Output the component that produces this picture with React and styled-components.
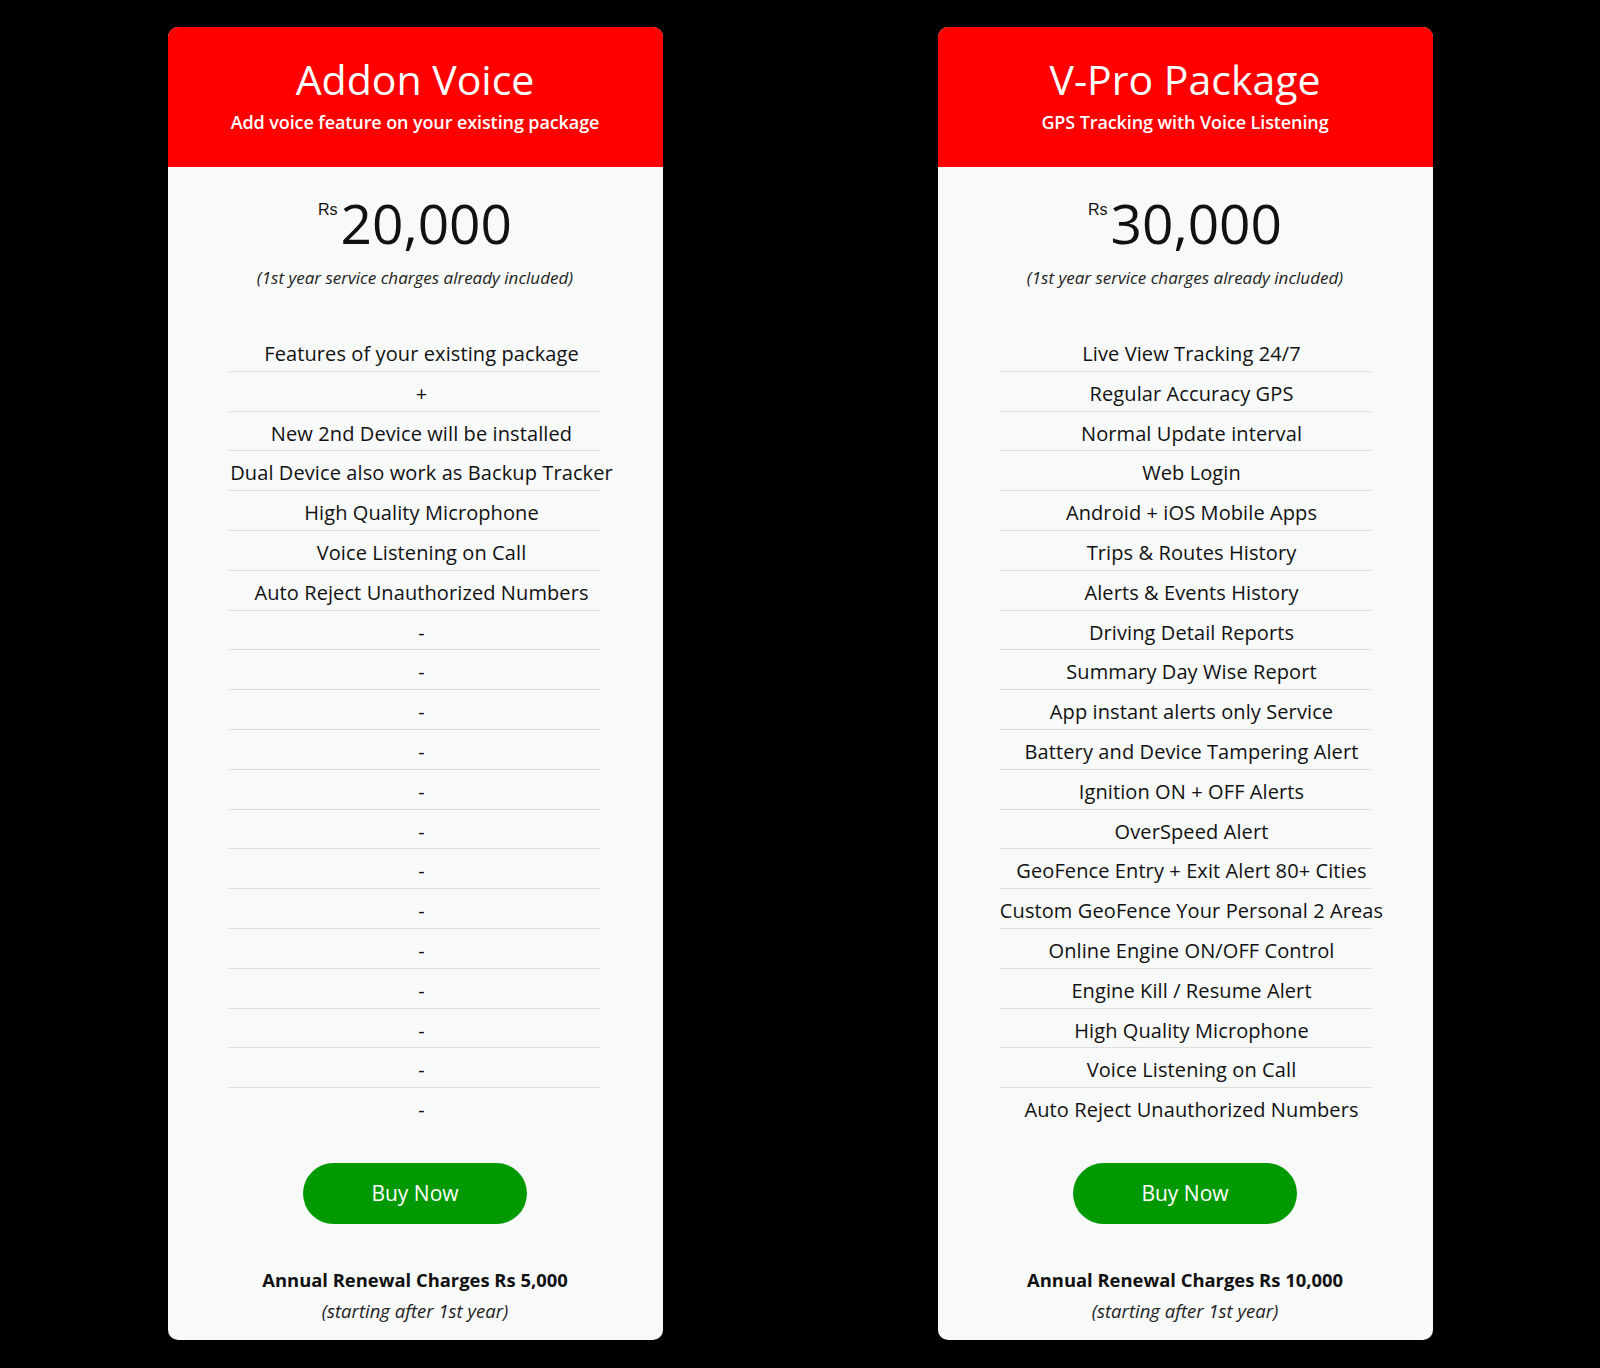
import React from "react";
import styled, { createGlobalStyle } from "styled-components";

const GlobalStyle = createGlobalStyle`
  html, body {
    margin: 0;
    padding: 0;
    background: #000;
  }
  body {
    font-family: "Open Sans", "Noto Sans", sans-serif;
  }
  * { box-sizing: border-box; }
`;

const Page = styled.div`
  min-height: 1368px;
  background: #000;
  padding: 27px 0 28px;
  display: flex;
  justify-content: center;
  align-items: flex-start;
  gap: 275px;
`;

const Card = styled.section`
  width: 495px;
  background: #f8f9f9;
  border-radius: 10px;
  overflow: hidden;
  display: flex;
  flex-direction: column;
  align-items: center;
  padding-bottom: 17px;
`;

const Header = styled.header`
  align-self: stretch;
  height: 140px;
  background: #ff0000;
  color: #fff;
  text-align: center;
  padding-top: 27px;
`;

const Title = styled.h2`
  margin: 0;
  font-size: 41px;
  line-height: 50px;
  font-weight: 400;
`;

const Subtitle = styled.p`
  margin: 6px 0 0;
  font-size: 18px;
  line-height: 24px;
  font-weight: 600;
  letter-spacing: -0.1px;
`;

const PriceLine = styled.div`
  display: flex;
  align-items: flex-start;
  justify-content: center;
  margin-top: 28px;
  color: #111;
`;

const Currency = styled.span`
  font-family: "Liberation Sans", Arial, sans-serif;
  font-size: 16px;
  line-height: 16px;
  margin-top: 7px;
  margin-right: 3px;
`;

const Amount = styled.span`
  font-size: 55px;
  line-height: 55px;
  font-weight: 400;
`;

const Note = styled.p`
  margin: 16px 0 0;
  font-size: 17px;
  line-height: 24px;
  font-style: italic;
  color: #222;
`;

const Features = styled.ul`
  list-style: none;
  margin: 42px 0 0;
  padding: 0;
  width: 372px;
`;

const Feature = styled.li`
  display: flex;
  justify-content: center;
  padding: 8px 0 2px 13px;
  font-size: 20px;
  line-height: 28.8px;
  height: 39.8px;
  color: #111;
  letter-spacing: 0.1px;
  white-space: nowrap;
  border-bottom: 1px solid #dddddd;
  &:last-child {
    border-bottom: none;
  }
`;

const BuyButton = styled.button`
  margin-top: 35px;
  width: 224px;
  height: 61px;
  border: none;
  border-radius: 31px;
  background: #009900;
  color: #fff;
  font-family: "Open Sans", sans-serif;
  font-size: 21px;
  display: flex;
  align-items: center;
  justify-content: center;
  cursor: pointer;
`;

const Renewal = styled.p`
  margin: 44px 0 0;
  font-size: 18.4px;
  line-height: 24px;
  font-weight: 700;
  color: #111;
`;

const RenewalNote = styled.p`
  margin: 7px 0 0;
  font-size: 18.5px;
  line-height: 24px;
  font-style: italic;
  color: #222;
`;

const plans = [
  {
    title: "Addon Voice",
    subtitle: "Add voice feature on your existing package",
    price: "20,000",
    features: [
      "Features of your existing package",
      "+",
      "New 2nd Device will be installed",
      "Dual Device also work as Backup Tracker",
      "High Quality Microphone",
      "Voice Listening on Call",
      "Auto Reject Unauthorized Numbers",
      ...Array(13).fill("-"),
    ],
    renewal: "Annual Renewal Charges Rs 5,000",
  },
  {
    title: "V-Pro Package",
    subtitle: "GPS Tracking with Voice Listening",
    price: "30,000",
    features: [
      "Live View Tracking 24/7",
      "Regular Accuracy GPS",
      "Normal Update interval",
      "Web Login",
      "Android + iOS Mobile Apps",
      "Trips & Routes History",
      "Alerts & Events History",
      "Driving Detail Reports",
      "Summary Day Wise Report",
      "App instant alerts only Service",
      "Battery and Device Tampering Alert",
      "Ignition ON + OFF Alerts",
      "OverSpeed Alert",
      "GeoFence Entry + Exit Alert 80+ Cities",
      "Custom GeoFence Your Personal 2 Areas",
      "Online Engine ON/OFF Control",
      "Engine Kill / Resume Alert",
      "High Quality Microphone",
      "Voice Listening on Call",
      "Auto Reject Unauthorized Numbers",
    ],
    renewal: "Annual Renewal Charges Rs 10,000",
  },
];

export default function App() {
  return (
    <>
      <GlobalStyle />
      <Page>
        {plans.map((p) => (
          <Card key={p.title}>
            <Header>
              <Title>{p.title}</Title>
              <Subtitle>{p.subtitle}</Subtitle>
            </Header>
            <PriceLine>
              <Currency>Rs</Currency>
              <Amount>{p.price}</Amount>
            </PriceLine>
            <Note>(1st year service charges already included)</Note>
            <Features>
              {p.features.map((f, i) => (
                <Feature key={i}>
                  <span>{f}</span>
                </Feature>
              ))}
            </Features>
            <BuyButton>Buy Now</BuyButton>
            <Renewal>{p.renewal}</Renewal>
            <RenewalNote>(starting after 1st year)</RenewalNote>
          </Card>
        ))}
      </Page>
    </>
  );
}
